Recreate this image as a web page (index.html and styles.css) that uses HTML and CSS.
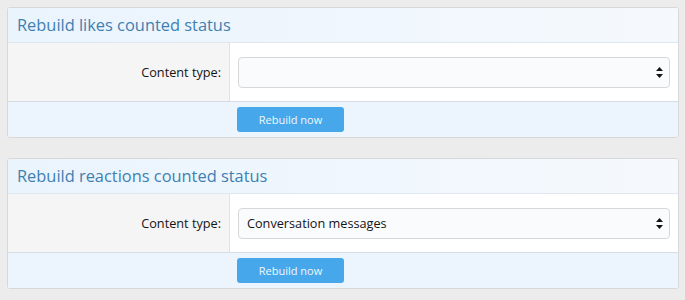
FILE: index.html
```html
<!DOCTYPE html>
<html lang="en">
<head>
  <meta charset="UTF-8" />
  <title>Rebuild counters</title>
  <link rel="stylesheet" href="styles.css">
</head>
<body>
  <!-- Likes -->
  <form class="block">
    <h2 class="block-title">Rebuild likes counted status</h2>
    <div class="form-row">
      <div class="row-label">Content type:</div>
      <div class="row-input">
        <div class="select">
          <span class="select-value"></span>
          <span class="select-arrows">
            <svg width="7" height="11" viewBox="0 0 7 11"><path d="M3.5 0 L7 4 H0 Z M3.5 11 L0 7 H7 Z" fill="#141414"/></svg>
          </span>
        </div>
      </div>
    </div>
    <div class="form-submit">
      <button type="button" class="button">Rebuild now</button>
    </div>
  </form>

  <!-- Reactions -->
  <form class="block">
    <h2 class="block-title">Rebuild reactions counted status</h2>
    <div class="form-row">
      <div class="row-label">Content type:</div>
      <div class="row-input">
        <div class="select">
          <span class="select-value">Conversation messages</span>
          <span class="select-arrows">
            <svg width="7" height="11" viewBox="0 0 7 11"><path d="M3.5 0 L7 4 H0 Z M3.5 11 L0 7 H7 Z" fill="#141414"/></svg>
          </span>
        </div>
      </div>
    </div>
    <div class="form-submit">
      <button type="button" class="button">Rebuild now</button>
    </div>
  </form>
</body>
</html>
```

FILE: styles.css
```css
body {
  margin: 0;
  padding: 7px 6px 0 7px;
  background: #ececec;
  font-family: "Open Sans", "Noto Sans", sans-serif;
  color: #141414;
}

.block {
  display: block;
  margin: 0 0 20px;
  border: 1px solid #d8d8d8;
  border-radius: 3px;
  background: #fff;
  overflow: hidden;
}

.block-title {
  margin: 0;
  padding: 6px 9px 7px;
  font-size: 16.4px;
  font-weight: normal;
  line-height: 21px;
  color: #3f80b2;
  background: linear-gradient(to right, #eaf4fd, #f5f9fd);
  border-bottom: 1px solid #dfe7ef;
}

.form-row {
  display: flex;
  height: 58px;
}

.row-label {
  width: 213px;
  padding-right: 8px;
  background: #f5f5f5;
  border-right: 1px solid #e2e2e2;
  display: flex;
  align-items: center;
  justify-content: flex-end;
  font-size: 12.7px;
}

.row-input {
  flex: 1;
  display: flex;
  align-items: center;
  padding: 0 8px 0 8px;
}

.select {
  flex: 1;
  height: 29px;
  border: 1px solid #d8d8d8;
  border-radius: 4px;
  background: #fafbfd;
  display: flex;
  align-items: center;
  justify-content: space-between;
  padding: 0 6px 0 8px;
  font-size: 12.7px;
}

.select-arrows {
  display: flex;
}

.form-submit {
  padding: 5px 0 5px 229px;
  background: #ecf5fd;
  border-top: 1px solid #d8dde3;
}

.button {
  display: block;
  width: 107px;
  height: 25px;
  border: 0;
  border-radius: 3px;
  background: #47a7eb;
  color: #f0f7fd;
  font-family: inherit;
  font-size: 11px;
  cursor: pointer;
}
```
